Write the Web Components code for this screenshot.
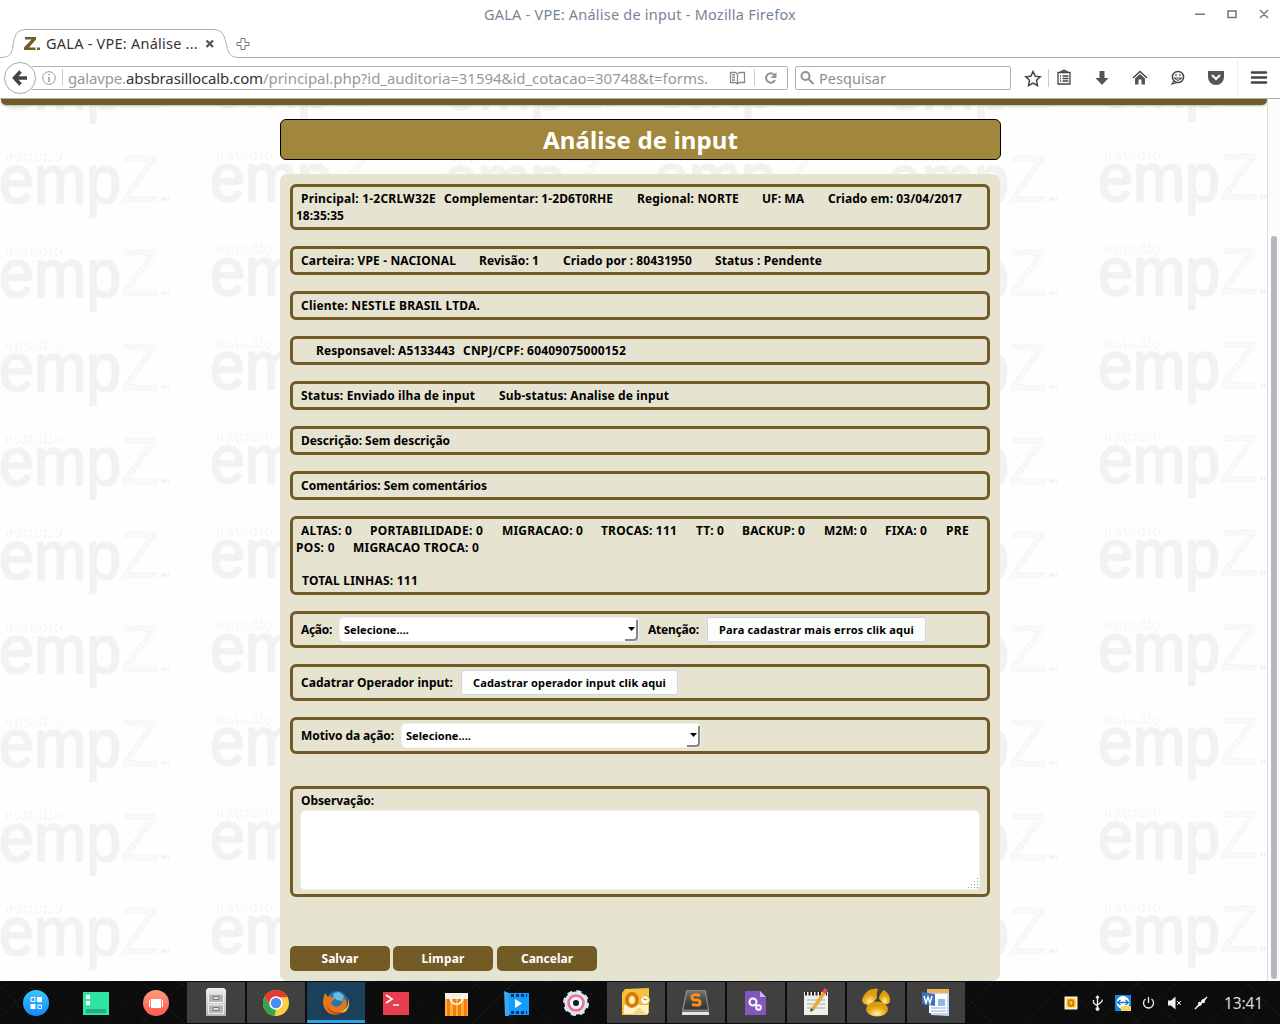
<!DOCTYPE html>
<html lang="pt-BR">
<head>
<meta charset="utf-8">
<title>GALA - VPE: Análise de input</title>
<style>
html,body{margin:0;height:100%;overflow:hidden}
body{font-family:"Noto Sans","Open Sans",sans-serif;background:#fff}
</style>
</head>
<body>
<desktop-screen></desktop-screen>
<script>
function define(name, html, init) {
  const t = document.createElement('template');
  t.innerHTML = html;
  customElements.define(name, class extends HTMLElement {
    connectedCallback() {
      if (this.shadowRoot) return;
      this.attachShadow({mode: 'open'}).appendChild(t.content.cloneNode(true));
      if (init) init(this, this.shadowRoot);
    }
  });
}
/* A single line of text, spaced to fill the width given by "w". */
define('fit-text', `<style>:host{display:inline-block;white-space:pre;flex:none}span{display:inline-block}</style><span><slot></slot></span>`, (el, root) => {
  const s = root.querySelector('span'), w = +el.getAttribute('w'), n = [...el.textContent].length;
  el.style.width = w + 'px';
  s.style.letterSpacing = ((w - s.getBoundingClientRect().width) / n) + 'px';
});
/* A row of texts placed by start/end columns: data = "start,end,text|..." */
define('field-line', `<style>:host{display:flex;height:17px;line-height:17px}</style>`, (el, root) => {
  let at = +(el.getAttribute('from') || 296);
  for (const part of el.getAttribute('data').split('|')) {
    const [a, b, ...r] = part.split(',');
    const f = document.createElement('fit-text');
    f.setAttribute('w', b - a);
    f.style.marginLeft = (a - at) + 'px';
    f.textContent = r.join(',');
    root.appendChild(f);
    at = +b;
  }
});
define('field-box', `<style>:host{display:block;box-sizing:border-box;border:3px solid #735b25;border-radius:6px;padding:3px;margin-bottom:16px;font-weight:700;font-size:12px;color:#000}
:host([controls]){display:flex;align-items:center;height:37px}:host([note]){height:111px;margin:16px 0 0}</style><slot></slot>`);
define('select-box', `<style>:host{display:flex;flex:none;box-sizing:border-box;width:300px;height:25px;border:1px solid #f1f1ed;border-radius:5px;background:#fff;font-size:11px;line-height:23px;padding-left:4px;justify-content:space-between}
.a{width:13px;height:21px;align-self:flex-end;border-right:2px solid #888;border-bottom:2px solid #888;border-radius:0 0 4px 0;box-sizing:border-box;display:flex;align-items:center;justify-content:flex-end}</style><fit-text w="65">Selecione....</fit-text><span class="a"><svg width="8" height="5"><path d="M0 0H7L3.5 4Z"/></svg></span>`);
define('link-button', `<style>:host{display:flex;flex:none;box-sizing:border-box;height:25px;border:1px solid #d0d4df;border-radius:2px;background:#fcfefd;font-size:11px;line-height:23px;justify-content:center}</style><slot></slot>`);
define('action-button', `<style>:host{display:flex;width:100px;height:25px;border-radius:5px;background:#735b25;color:#fff;font:700 12px/25px "Noto Sans",sans-serif;justify-content:center}</style><slot></slot>`);
define('water-mark', `<style>:host{display:block;overflow:hidden}svg{display:block}</style>
<svg width="1267" height="882"><defs>
<g id="m" font-family="Liberation Sans"><text x="-1" y="50" font-size="69" textLength="122" lengthAdjust="spacingAndGlyphs" fill="#f2f2f2" stroke="#f1f1f1" stroke-width="2.500" stroke-dasharray="3 1">emp</text><text x="5" y="9" font-size="15" textLength="57" fill="none" stroke="#f3f3f3" stroke-dasharray="2 3" stroke-width="1">estudio</text><text x="121" y="49" font-size="67" textLength="38" lengthAdjust="spacingAndGlyphs" fill="#f9f9f9" stroke="#f2f2f2" stroke-dasharray="3 2">Z</text><path d="M162 46h7" stroke="#f1f1f1" stroke-width="4" stroke-dasharray="2 1"/></g>
<pattern id="p" width="444" height="94" patternUnits="userSpaceOnUse" y="49"><use href="#m" y="5"/><use href="#m" x="211" y="3"/></pattern></defs>
<rect width="1267" height="882" fill="url(#p)"/></svg>`);
define('audit-form', `<style>:host{display:flex;flex-direction:column;width:721px;margin-left:280px}
h1{margin:20px 0 14px;box-sizing:border-box;height:41px;border:1px solid #000;border-radius:6px;background:#a1873b;color:#fff;font-size:24px;line-height:40px;font-weight:700;display:flex;justify-content:center}
section{width:700px;height:797px;padding:10px 10px 0;background:#e6e3d0;border-radius:7px}
.gap{height:16px}.ta{box-sizing:border-box;width:680px;height:80px;margin:1px 0 0 4px;border:1px solid #f0f0ed;border-radius:5px;background:#fff;display:flex;align-items:flex-end;justify-content:flex-end}
.btns{display:flex;margin-top:49px}.btns>*+*{margin-left:3px}.btns>:last-child{margin-left:4px}</style>
<h1><fit-text w="195">Análise de input</fit-text></h1>
<section>
<field-box><field-line data="301,436,Principal: 1-2CRLW32E|444,613,Complementar: 1-2D6T0RHE|637,739,Regional: NORTE|762,804,UF: MA|828,962,Criado em: 03/04/2017"></field-line><field-line data="296,344,18:35:35"></field-line></field-box>
<field-box><field-line data="301,456,Carteira: VPE - NACIONAL|479,539,Revisão: 1|563,692,Criado por : 80431950|715,822,Status : Pendente"></field-line></field-box>
<field-box><field-line data="301,480,Cliente: NESTLE BRASIL LTDA."></field-line></field-box>
<field-box><field-line data="316,455,Responsavel: A5133443|463,626,CNPJ/CPF: 60409075000152"></field-line></field-box>
<field-box><field-line data="301,475,Status: Enviado ilha de input|499,669,Sub-status: Analise de input"></field-line></field-box>
<field-box><field-line data="301,450,Descrição: Sem descrição"></field-line></field-box>
<field-box><field-line data="301,487,Comentários: Sem comentários"></field-line></field-box>
<field-box><field-line data="301,352,ALTAS: 0|370,483,PORTABILIDADE: 0|502,583,MIGRACAO: 0|601,677,TROCAS: 111|696,724,TT: 0|742,805,BACKUP: 0|824,867,M2M: 0|885,927,FIXA: 0|946,969,PRE"></field-line><field-line data="296,335,POS: 0|353,479,MIGRACAO TROCA: 0"></field-line><div class="gap"></div><field-line data="302,418,TOTAL LINHAS: 111"></field-line></field-box>
<field-box controls><field-line data="301,332,Ação:"></field-line><select-box style="margin-left:7px"></select-box><field-line from="639" data="648,699,Atenção:"></field-line><link-button style="width:219px;margin-left:8px"><fit-text w="195">Para cadastrar mais erros clik aqui</fit-text></link-button></field-box>
<field-box controls><field-line data="301,453,Cadatrar Operador input:"></field-line><link-button style="width:217px;margin-left:8px"><fit-text w="193">Cadastrar operador input clik aqui</fit-text></link-button></field-box>
<field-box controls><field-line data="301,394,Motivo da ação:"></field-line><select-box style="margin-left:7px"></select-box></field-box>
<div class="gap"></div>
<field-box note style="margin-top:0"><field-line data="301,374,Observação:"></field-line><div class="ta"><svg width="11" height="11"><path d="M9.5 0v10M6.500 3v7M3.500 6v4M.5 9v1" stroke="#999" stroke-dasharray="1 2"/></svg></div></field-box>
<div class="btns"><action-button><fit-text w="37">Salvar</fit-text></action-button><action-button><fit-text w="43">Limpar</fit-text></action-button><action-button><fit-text w="52">Cancelar</fit-text></action-button></div>
</section>`);
define('page-view', `<style>:host{display:grid;grid-template-columns:1267px 13px;height:882px;overflow:hidden;background:#fefefe}
water-mark,.c{grid-area:1/1;min-width:0}.c{overflow:hidden;z-index:1}.bar{height:6px;margin:0 0 0 1px;background:#735b25;border-radius:0 0 5px 5px;box-shadow:0 1px 2px #bbb}
audit-form{margin-top:-6px}.s{grid-area:1/2;border-left:1px solid #dcdce0;background:#fcfcfc;padding:137px 0 0 3px}.s i{display:block;width:6px;height:743px;border-radius:3px;background:#b6b8bf}</style>
<water-mark></water-mark><div class="c"><div class="bar"></div><audit-form></audit-form></div><div class="s"><i></i></div>`);
define('browser-chrome', `<style>:host{display:block;height:99px;background:#fff;color:#333;box-sizing:border-box;border-bottom:1px solid #adadad}
.title{height:28px;display:grid;grid-template-columns:1fr auto 1fr;align-items:center;font-size:14.5px;color:#788399}
.win{justify-self:end;display:flex}.tabs{height:30px;display:grid}.tabs>svg,.t{grid-area:1/1}.t{display:flex;align-items:center;padding-left:24px;font-size:14.5px;color:#333}
.nav{height:40px;display:flex;align-items:center}.nav>svg{flex:none}.url{box-sizing:border-box;height:24px;width:756px;margin-left:-5px;border:1px solid #b2b2b2;border-left:0;border-radius:0 2px 2px 0;display:flex;align-items:center;font-size:15px;color:#999;padding-left:10px}
.u{display:flex;flex:none;width:641px;margin-left:4px}.url>svg{flex:none}b{font-weight:400;color:#333;display:flex}
.q{box-sizing:border-box;width:216px;height:24px;margin-left:7px;border:1px solid #b2b2b2;border-radius:2px;display:flex;align-items:center;font-size:14.5px;color:#8f8f8f;padding-left:4px;gap:4px}</style>
<div class="title"><i></i><fit-text w="312">GALA - VPE: Análise de input - Mozilla Firefox</fit-text><svg class="win" width="90" height="28" fill="none" stroke="#777" stroke-width="1.5"><path d="M5 14.300h10M38 11h8v6.500h-8zM70 10l8 8M78 10l-8 8"/></svg></div>
<div class="tabs"><svg width="1280" height="30" fill="none" stroke="#abb0b7"><path d="M0 29.500C11 29.500 12 25 13.500 15C15 5 18 1.500 27 1.500H212C221 1.500 224 5 226 15C228 25 230 29.500 239 29.500H1280"/><path d="M241 10.500h4v4h4v3h-4v4h-4v-4h-4v-3h4z" stroke="#777"/></svg>
<div class="t"><svg width="17" height="16"><path d="M1 2H12V4.500L5 12.500H11.500V15H0V12.500L7.500 4.500H1ZM13 12.500h3v2.500h-3z" fill="#735b25"/></svg><fit-text w="152" style="margin-left:5px">GALA - VPE: Análise ...</fit-text><svg width="10" height="10" style="margin-left:7px"><path d="M1.500 2.500l6.500 6.500M8 2.500l-6.500 6.500" stroke="#555" stroke-width="2.300"/></svg></div></div>
<div class="nav"><svg width="33" height="34" style="margin-left:4px;z-index:1"><circle cx="16" cy="17" r="15.500" fill="#fff" stroke="#aaa"/><path d="M23 17H11M16.500 10.500L10.500 17L16.500 23.500" fill="none" stroke="#444" stroke-width="3.500"/></svg>
<div class="url"><svg width="22" height="20" fill="none" stroke="#999"><circle cx="7" cy="10" r="6.300"/><path d="M7 9v5M7 6v1.500" stroke-width="1.500"/><path d="M20.500 1v17" stroke="#ccc"/></svg><div class="u"><fit-text w="58">galavpe.</fit-text><b><fit-text w="137">absbrasillocalb.com</fit-text></b><fit-text w="445">/principal.php?id_auditoria=31594&amp;id_cotacao=30748&amp;t=forms.</fit-text></div>
<svg width="66" height="24" fill="none" stroke="#888" style="margin-left:10px"><path d="M11.500 6.500h5l2 1.500l2-1.500h5v10h-5l-2 1.500l-2-1.500h-5zM18.500 8v9M13 9h3M13 11.500h3M13 14h3" stroke-width="1.300"/><path d="M35.500 3v17" stroke="#ccc"/><path d="M55 8.500A4.700 4.700 0 1 0 56 14" stroke="#8995a5" stroke-width="2"/><path d="M51.500 12h6v-6z" fill="#8995a5" stroke="none"/></svg></div>
<div class="q"><svg width="15" height="16" fill="none" stroke="#909090" stroke-width="2"><circle cx="5.500" cy="6" r="4"/><path d="M8.500 9l5 5"/></svg><fit-text w="67">Pesquisar</fit-text></div>
<svg width="269" height="40" fill="none" stroke="#444"><path d="M22 13.500l2.200 4.700 5 .6-3.700 3.500 1 5.200-4.500-2.500-4.500 2.500 1-5.200-3.700-3.500 5-.6z" stroke-width="1.500"/><path d="M37.500 11v18" stroke="#ccc"/><path d="M47 14.500h12v11.500h-12zM50 14.500v-1h2v-1h2v1h2v1M49 18h1M49 20.500h1M49 23h1M51.500 18h6M51.500 20.500h6M51.500 23h6" stroke-width="1.300"/><path d="M88.500 13h5v7h4l-6.500 7-6.500-7h4z" fill="#555" stroke="none"/><path d="M122 20l7-6.500 7 6.500" stroke-width="1.500"/><path d="M124 20.500l5-4.500 5 4.500V26.500h-3.500v-5h-3v5H124z" fill="#555" stroke="none"/><circle cx="167" cy="19" r="5.600" stroke-width="1.500"/><path d="M163.500 20q3.500 4.500 7 0zM165 16v2M169 16v2M163 23l-2 3 5-1.500" stroke-width="1.200"/><path d="M197 13h16v6a8 8 0 0 1-16 0z" fill="#555" stroke="none"/><path d="M201 17l4 4 4-4" stroke="#fff" stroke-width="2"/><path d="M226.500 2v35" stroke="#ececec"/><path d="M241 14.500h14M241 19.500h14M241 24.500h14" stroke-width="2.600" stroke-linecap="round"/></svg></div>`);
/* Launcher icons, each drawn in a 30 by 30 box. */
const icons = [
 '<circle cx="15" cy="15" r="13" fill="url(#gb)"/><path d="M16 9h5v5h-5zM9.500 16h5v5h-5z" fill="#fff"/><path d="M10 9.500h4v4h-4zM17 17h3.500v3.500H17z" fill="none" stroke="#fff"/>',
 '<path d="M2 4h26v23H2z" fill="#30e5a2"/><path d="M5 21h20v4H5z" fill="#20b47d"/><path d="M5 7h4v4H5zM5 13h4v4H5z" fill="#fff"/>',
 '<circle cx="15" cy="15" r="13" fill="url(#gr)"/><path d="M10 11h10v9H10zM8 12h1v7H8zM21 12h1v7h-1z" fill="#fff"/>',
 '<path d="M5 2l2-2h16l2 2v26H5z" fill="url(#gs)"/><path d="M7.500 6h15v8.500h-15zM7.500 17h15v8.500h-15z" fill="#b5b5b2" stroke="#eee"/><path d="M12 8.500h6v3h-6zM12 19.500h6v3h-6z" fill="#ddd" stroke="#777"/>',
 '<circle cx="15" cy="15" r="13" fill="#ffcd40"/><path d="M3.700 8.500A13 13 0 0 1 26.500 9L15 9.500 9.500 18z" fill="#e33b2e"/><path d="M3.700 8.500L9.500 18.500 15 21.500 13.500 28A13 13 0 0 1 3.700 8.500" fill="#35a452"/><circle cx="15" cy="15" r="6" fill="#4b8df5" stroke="#fff" stroke-width="1.500"/>',
 '<circle cx="16" cy="13.500" r="10.500" fill="#2478b0"/><path d="M13 5l5-1 5 4-2 5-5-1-4-3z" fill="#64c0e8"/><path d="M4 5l3 4c2-1 5 0 7 2l-4 3c1 5 6 6 9 3 4-1 2-5 2-8 5 3 6 8 3 12-5 8-16 7-20 0C1 16 2 10 4 5z" fill="#e8751a"/><path d="M26.500 9c3 9-3 15-9.500 15 8 4 14-6 9.500-15" fill="#ffc536"/><path d="M5 17c2 8 11 12 18 6-6 3-14 1-18-6" fill="#c54516"/>',
 '<path d="M2 4h26v23H2z" fill="#e93d4d"/><path d="M5 7l6 4-6 4M12 17h6" fill="none" stroke="#fff" stroke-width="1.700"/>',
 '<path d="M4 9h23v19H4z" fill="#ffad3b"/><path d="M4 5h23v6H4z" fill="#f1f1e8"/><path d="M6 11h3v17H6zM12 11h3v17h-3zM17 11h3v17h-3zM23 11h3v17h-3z" fill="#f77b0d"/><path d="M9 8c0 11 13 11 13 0" fill="none" stroke="#fff" stroke-width="1.500"/>',
 '<path d="M7 5h21v22H7z" fill="#129cff"/><path d="M3 3l5 2v23H4z" fill="#40a5ef"/><path d="M10 7.500h16M10 24.500h16" stroke="#083766" stroke-width="3" stroke-dasharray="3 2"/><path d="M14 11v9l7-4.500z" fill="#fff"/>',
 '<circle cx="15" cy="15" r="11.500" fill="#d7e8fb"/><circle cx="15" cy="15" r="11.500" fill="none" stroke="#d7e8fb" stroke-width="3" stroke-dasharray="5 4.030"/><circle cx="15" cy="15" r="7.500" fill="#eef4fc" stroke="#fb6c83" stroke-width="2.500"/><circle cx="15" cy="15" r="3" fill="#181818"/>',
 '<path d="M4 1l24-1v25l-3 2H1V5z" fill="#f6c13c"/><path d="M3 17h24v9H3z" fill="#fff4c8"/><path d="M10 27l8-8 9 8" fill="#f4d984"/><ellipse cx="11" cy="12" rx="5" ry="6" fill="#fff3ba" stroke="#d97b09" stroke-width="4"/><circle cx="24" cy="12" r="4.500" fill="#fff8e0" stroke="#e8a833"/><path d="M22 10l2 2 2-1" stroke="#b57d16" fill="none"/>',
 '<path d="M5 2h20l3 20v4H1v-4z" fill="#777"/><path d="M6 2.500h18l3.500 19.500H2z" fill="url(#gk)" stroke="#888"/><path d="M1 24h27v3H1z" fill="#e5e5e5"/><path d="M19 7.500q-8-2-8 1.500t4 3 4 3-8 1.500" fill="none" stroke="#ff8d16" stroke-width="3"/>',
 '<path d="M4 3h15l6 6v18H4z" fill="#8259bb"/><path d="M19 3v6h6z" fill="#d0b7ed"/><g fill="none" stroke="#fff" stroke-width="2"><circle cx="12" cy="14" r="3.500"/><circle cx="17.500" cy="19.500" r="2.300"/></g>',
 '<path d="M3 4h24v23H3z" fill="#f0f0e9"/><path d="M4 5.500h22" stroke="#222" stroke-width="4" stroke-dasharray="2 1.500"/><path d="M6 12h18M6 16h18M6 20h18" stroke="#aaa"/><path d="M23.500 4L12 21" stroke="#f3a535" stroke-width="3.500"/><path d="M25 1l-2 4" stroke="#dd4e55" stroke-width="4"/><path d="M9 24l1-4 3 2z" fill="#444"/>',
 '<path d="M1 12C3 5 8 0 17 1q-2 4-1 9-3 4-7 7C4 17 1 15 1 12" fill="url(#gy)"/><path d="M18 11q0-5 5-9 7 5 6 12-2 3-6 2" fill="url(#gy)"/><ellipse cx="16" cy="21" rx="11" ry="7.500" fill="url(#gy)"/>',
 '<path d="M6 1h22v27l-18-1z" fill="#c5daf2"/><path d="M6 1h22v4H6z" fill="#efb45b"/><path d="M8 6h18v19H8z" fill="#fff"/><path d="M17 11h7v7h-7z" fill="#91b6df"/><path d="M10 20h15M10 23h15" stroke="#8cadd5"/><path d="M1 4l13 2v12L1 16z" fill="#3b72bd"/><path d="M3 8l2 7 2-6 2 6 2-7" fill="none" stroke="#fff" stroke-width="1.500"/>'
];
define('task-item', `<style>:host{display:flex;width:58px;height:41px;margin:0 1px;align-items:center;justify-content:center;box-sizing:border-box;padding-top:1px}:host([open]){background:#404040}:host([active]){background:#1c405a;border-bottom:3px solid #2aa1f0;padding-top:4px}</style>
<svg width="30" height="30"><defs><linearGradient id="gb" x2="0" y2="1"><stop stop-color="#36c7ff"/><stop offset="1" stop-color="#1787ff"/></linearGradient><linearGradient id="gr" x2="0" y2="1"><stop stop-color="#ff9b7c"/><stop offset="1" stop-color="#ff5652"/></linearGradient><linearGradient id="gs" x2="0" y2="1"><stop stop-color="#eee"/><stop offset="1" stop-color="#b5b5b2"/></linearGradient><linearGradient id="gk" x2="0" y2="1"><stop stop-color="#777"/><stop offset=".5" stop-color="#484848"/><stop offset="1" stop-color="#333"/></linearGradient><radialGradient id="gy" cy=".8"><stop stop-color="#fff1b5"/><stop offset=".5" stop-color="#f0c040"/><stop offset="1" stop-color="#dc9c0c"/></radialGradient></defs><g></g></svg>`, (el, root) => { root.querySelector('g').innerHTML = icons[el.getAttribute('icon')]; });
define('task-bar', `<style>:host{display:flex;box-sizing:border-box;height:43px;padding:1px 0 0 6px;background:repeating-linear-gradient(45deg,#1a1a1a80 0 1px,#0000 1px 26px),repeating-linear-gradient(135deg,#1a1a1a80 0 1px,#0000 1px 26px),#0c0c0c;color:#ddd;font-size:15.500px}nav{display:flex}.tray{margin-left:94px}.clock{margin:0 0 0 4px;line-height:43px}</style><nav></nav>
<svg class="tray" width="160" height="42" fill="none" stroke="#eee"><path d="M5.500 15.500h11v11h-11z" fill="#f9bd37" stroke="#fff4c3" stroke-width="2"/><ellipse cx="11" cy="21" rx="2.500" ry="3" stroke="#c47a00" stroke-width="1.700"/>
<path d="M37.500 14v13M33.500 18v3l4 3M42 17.500v2L37.500 23M36 16l1.500-2 1.500 2" stroke-width="1.300"/><circle cx="37.500" cy="27" r="1.500" fill="#eee"/>
<path d="M55 13h16v16H55z" fill="#178ae0" stroke="none"/><circle cx="63" cy="20.500" r="6.500" fill="#fff" stroke="none"/><path d="M58.500 20.500h9M60.500 18l-3 2.500 3 2.500M65.500 18l3 2.500-3 2.500" stroke="#1679cb" stroke-width="1.400"/><path d="M61 24h10v5H61z" fill="#f2d769" stroke="none"/>
<path d="M85.500 17a5 5 0 1 0 6 0M88.500 15v6" stroke-width="1.300"/><path d="M108 18.500h3l4.500-4v13l-4.500-4h-3z" fill="#eee" stroke="none"/><path d="M117 19l4 4M121 19l-4 4"/>
<path d="M135 27l4-4M143 19l4-4" stroke-width="1.500"/><path d="M138 24l1-4 2 1 1-3 3-1-1 4-2-1-1 3z" fill="#eee"/></svg><span class="clock"><fit-text w="39">13:41</fit-text></span>`, (el, root) => {
  const nav = root.querySelector('nav');
  icons.forEach((_, i) => {
    const t = document.createElement('task-item');
    t.setAttribute('icon', i);
    if (i === 5) t.setAttribute('active', '');
    else if (i === 3 || i === 4 || i > 9) t.setAttribute('open', '');
    nav.appendChild(t);
  });
});
define('desktop-screen', `<style>:host{display:flex;flex-direction:column;width:1280px;height:1024px;overflow:hidden}</style><browser-chrome></browser-chrome><page-view></page-view><task-bar></task-bar>`);
</script>
</body>
</html>
